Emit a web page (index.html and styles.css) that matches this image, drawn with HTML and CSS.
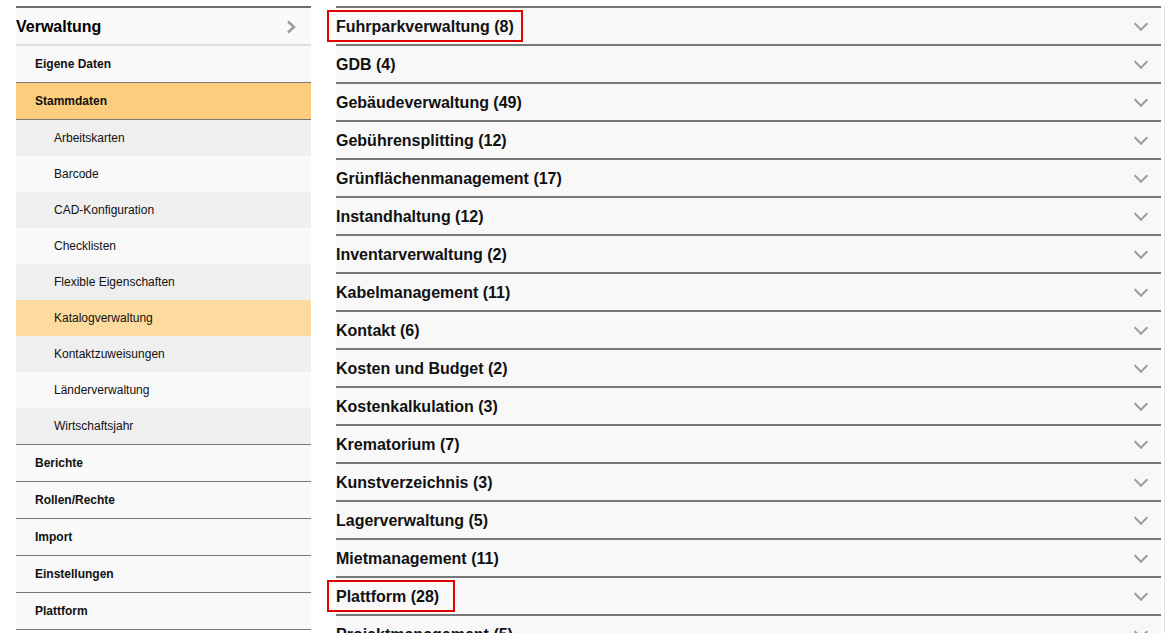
FILE: index.html
```html
<!DOCTYPE html>
<html lang="de">
<head>
  <meta charset="UTF-8" />
  <title>Verwaltung - Stammdaten</title>
  <link rel="stylesheet" href="styles.css">
</head>
<body>
  <div class="page">
    <nav class="sidebar">
      <div class="side-head">
        <span>Verwaltung</span>
        <svg class="arrow-right" width="10" height="14" viewBox="0 0 10 14"><path d="M2 1.5 L8 7 L2 12.5" fill="none" stroke="#999" stroke-width="2.4"/></svg>
      </div>
      <ul class="menu">
        <li><a class="item">Eigene Daten</a></li>
        <li>
          <a class="item active">Stammdaten</a>
          <ul class="sub">
            <li class="alt">Arbeitskarten</li>
            <li>Barcode</li>
            <li class="alt">CAD-Konfiguration</li>
            <li>Checklisten</li>
            <li class="alt">Flexible Eigenschaften</li>
            <li class="current">Katalogverwaltung</li>
            <li class="alt">Kontaktzuweisungen</li>
            <li>Länderverwaltung</li>
            <li class="alt">Wirtschaftsjahr</li>
          </ul>
        </li>
        <li><a class="item">Berichte</a></li>
        <li><a class="item">Rollen/Rechte</a></li>
        <li><a class="item">Import</a></li>
        <li><a class="item">Einstellungen</a></li>
        <li><a class="item">Plattform</a></li>
      </ul>
    </nav>

    <main class="content">
      <div class="group"><span class="title mark">Fuhrparkverwaltung (8)</span><i class="chev"></i></div>
      <div class="group"><span class="title">GDB (4)</span><i class="chev"></i></div>
      <div class="group"><span class="title">Gebäudeverwaltung (49)</span><i class="chev"></i></div>
      <div class="group"><span class="title">Gebührensplitting (12)</span><i class="chev"></i></div>
      <div class="group"><span class="title">Grünflächenmanagement (17)</span><i class="chev"></i></div>
      <div class="group"><span class="title">Instandhaltung (12)</span><i class="chev"></i></div>
      <div class="group"><span class="title">Inventarverwaltung (2)</span><i class="chev"></i></div>
      <div class="group"><span class="title">Kabelmanagement (11)</span><i class="chev"></i></div>
      <div class="group"><span class="title">Kontakt (6)</span><i class="chev"></i></div>
      <div class="group"><span class="title">Kosten und Budget (2)</span><i class="chev"></i></div>
      <div class="group"><span class="title">Kostenkalkulation (3)</span><i class="chev"></i></div>
      <div class="group"><span class="title">Krematorium (7)</span><i class="chev"></i></div>
      <div class="group"><span class="title">Kunstverzeichnis (3)</span><i class="chev"></i></div>
      <div class="group"><span class="title">Lagerverwaltung (5)</span><i class="chev"></i></div>
      <div class="group"><span class="title">Mietmanagement (11)</span><i class="chev"></i></div>
      <div class="group"><span class="title mark mark-wide">Plattform (28)</span><i class="chev"></i></div>
      <div class="group"><span class="title">Projektmanagement (5)</span><i class="chev"></i></div>
      <div class="group"><span class="title">Reinigung (4)</span><i class="chev"></i></div>
    </main>
  </div>
</body>
</html>
```

FILE: styles.css
```css
html, body {
  margin: 0;
  height: 633px;
  overflow: hidden;
  background: #fff;
}
body {
  font-family: "Liberation Sans", Arial, sans-serif;
  color: #111;
}
.page {
  display: flex;
  align-items: flex-start;
  padding: 6px 0 0 16px;
}

/* sidebar */
.sidebar {
  width: 295px;
  flex-shrink: 0;
  border-top: 2px solid #6f6f6f;
  background: #f9f9f9;
}
.side-head {
  height: 36px;
  display: flex;
  align-items: center;
  justify-content: space-between;
  padding-right: 15px;
  font-size: 16px;
  font-weight: bold;
  color: #000;
  border-bottom: 2px solid #dedede;
}
.side-head span {
  padding-top: 1px;
}
.arrow-right {
  display: block;
  margin-top: 1px;
}
.menu, .sub {
  list-style: none;
  margin: 0;
  padding: 0;
}
.item {
  display: block;
  height: 36px;
  line-height: 36px;
  padding-left: 19px;
  font-size: 12px;
  font-weight: bold;
  border-bottom: 1px solid #777;
}
.item.active {
  background: #fbcd7d;
}
.sub {
  border-bottom: 1px solid #777;
}
.sub li {
  height: 36px;
  line-height: 36px;
  padding-left: 38px;
  font-size: 12px;
  background: #f9f9f9;
}
.sub li.alt {
  background: #efefef;
}
.sub li.current {
  background: #fddb9f;
}

/* main list */
.content {
  width: 825px;
  margin-left: 25px;
  padding-right: 3px;
  border-right: 1px solid #e2e2e2;
}
.group {
  height: 36px;
  border-top: 2px solid #777;
  background: #f8f8f8;
  display: flex;
  align-items: center;
  justify-content: space-between;
}
.title {
  position: relative;
  font-size: 16px;
  font-weight: bold;
  line-height: 35px;
  padding-top: 1px;
}
.mark::after {
  content: "";
  position: absolute;
  left: -9px;
  right: -9px;
  top: 2px;
  bottom: 2px;
  border: 2px solid #e30000;
}
.mark-wide::after {
  right: -16px;
}
.chev {
  width: 8px;
  height: 8px;
  margin-right: 15px;
  margin-top: -5px;
  border-right: 2.5px solid #9a9a9a;
  border-bottom: 2.5px solid #9a9a9a;
  transform: rotate(45deg);
}
```
